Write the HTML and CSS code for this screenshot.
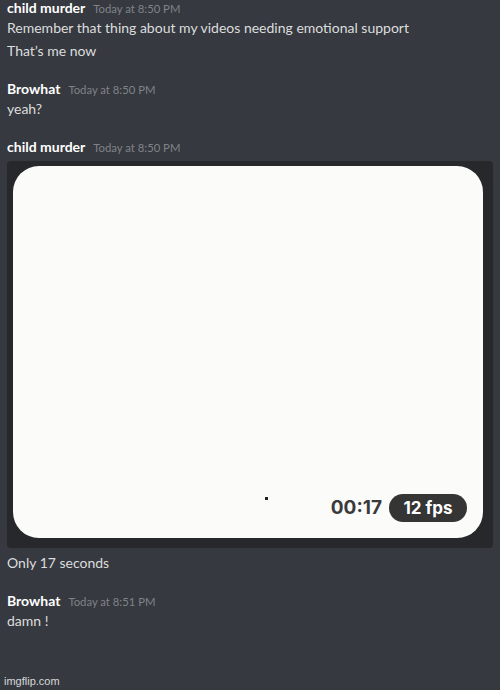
FILE: index.html
```html
<!DOCTYPE html>
<html>
<head>
<meta charset="utf-8">
<link rel="stylesheet" href="styles.css">
</head>
<body>
<div class="chat">
  <div class="group first">
    <div class="header"><span class="name">child murder</span><span class="time">Today at 8:50 PM</span></div>
    <div class="line">Remember that thing about my videos needing emotional support</div>
    <div class="line">That’s me now</div>
  </div>
  <div class="group">
    <div class="header"><span class="name">Browhat</span><span class="time">Today at 8:50 PM</span></div>
    <div class="line">yeah?</div>
  </div>
  <div class="group">
    <div class="header"><span class="name">child murder</span><span class="time">Today at 8:50 PM</span></div>
    <div class="attachment">
      <div class="card">
        <span class="dot"></span>
        <span class="timer">00:17</span>
        <span class="pill">12 fps</span>
      </div>
    </div>
    <div class="line after">Only 17 seconds</div>
  </div>
  <div class="group">
    <div class="header"><span class="name">Browhat</span><span class="time">Today at 8:51 PM</span></div>
    <div class="line">damn !</div>
  </div>
</div>
<div class="watermark">imgflip.com</div>
</body>
</html>
```
FILE: styles.css
```css
html, body {
  margin: 0;
  padding: 0;
}
body {
  width: 500px;
  height: 690px;
  background: #36393f;
  font-family: "Lato", "Open Sans", sans-serif;
  position: relative;
  overflow: hidden;
}
.chat {
  padding-left: 7px;
}
.group {
  margin-top: 19px;
}
.group.first {
  margin-top: 0;
}
.header {
  height: 16px;
  line-height: 16px;
  display: flex;
  align-items: baseline;
  gap: 8px;
}
.name {
  color: #ffffff;
  font-weight: 700;
  font-size: 14px;
}
.time {
  color: #80838a;
  font-size: 11.3px;
}
.line {
  color: #dcddde;
  font-size: 14px;
  line-height: 23px;
}
.line.after {
  margin-top: 3px;
}
.attachment {
  margin-top: 6px;
  width: 486px;
  height: 387px;
  box-sizing: border-box;
  background: #26282c;
  border-radius: 4px;
  padding: 5px 10px 10px 6px;
}
.card {
  position: relative;
  height: 100%;
  background: #fbfbfa;
  border-radius: 26px;
  display: flex;
  justify-content: flex-end;
  align-items: flex-end;
  gap: 7px;
  padding: 0 16px 16px 0;
  box-sizing: border-box;
}
.dot {
  position: absolute;
  left: 252px;
  top: 331px;
  width: 3px;
  height: 3px;
  background: #222;
}
.timer {
  font-family: "Inter", sans-serif;
  font-weight: 700;
  font-size: 19px;
  color: #3a3a3a;
  line-height: 28px;
}
.pill {
  background: #353535;
  color: #fff;
  font-family: "Inter", sans-serif;
  font-weight: 700;
  font-size: 17px;
  height: 28px;
  line-height: 28px;
  width: 78px;
  text-align: center;
  border-radius: 14px;
}
.watermark {
  position: absolute;
  left: 4px;
  top: 673px;
  color: #d8d9da;
  font-family: "Liberation Sans", Arial, sans-serif;
  font-size: 11px;
  line-height: 16px;
}
```
